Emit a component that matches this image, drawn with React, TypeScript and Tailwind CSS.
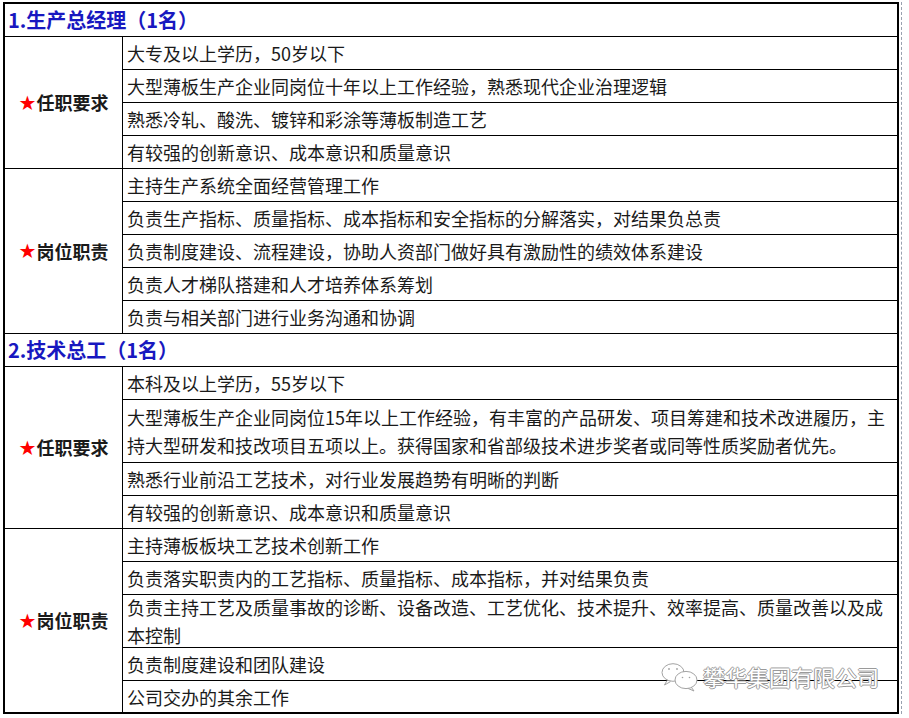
type Row = { lines: string[]; h: string }
type Group = { label: string; rows: Row[] }
type Section = { title: string; groups: Group[] }

const r = (text: string, h = 'h-[33px]'): Row => ({ lines: text.split('\n'), h })

const sections: Section[] = [
  {
    title: '1.生产总经理（1名）',
    groups: [
      {
        label: '任职要求',
        rows: [
          r('大专及以上学历，50岁以下'),
          r('大型薄板生产企业同岗位十年以上工作经验，熟悉现代企业治理逻辑'),
          r('熟悉冷轧、酸洗、镀锌和彩涂等薄板制造工艺'),
          r('有较强的创新意识、成本意识和质量意识'),
        ],
      },
      {
        label: '岗位职责',
        rows: [
          r('主持生产系统全面经营管理工作'),
          r('负责生产指标、质量指标、成本指标和安全指标的分解落实，对结果负总责'),
          r('负责制度建设、流程建设，协助人资部门做好具有激励性的绩效体系建设'),
          r('负责人才梯队搭建和人才培养体系筹划'),
          r('负责与相关部门进行业务沟通和协调'),
        ],
      },
    ],
  },
  {
    title: '2.技术总工（1名）',
    groups: [
      {
        label: '任职要求',
        rows: [
          r('本科及以上学历，55岁以下'),
          r(
            '大型薄板生产企业同岗位15年以上工作经验，有丰富的产品研发、项目筹建和技术改进履历，主\n持大型研发和技改项目五项以上。获得国家和省部级技术进步奖者或同等性质奖励者优先。',
            'h-[63px]',
          ),
          r('熟悉行业前沿工艺技术，对行业发展趋势有明晰的判断'),
          r('有较强的创新意识、成本意识和质量意识'),
        ],
      },
      {
        label: '岗位职责',
        rows: [
          r('主持薄板板块工艺技术创新工作'),
          r('负责落实职责内的工艺指标、质量指标、成本指标，并对结果负责'),
          r(
            '负责主持工艺及质量事故的诊断、设备改造、工艺优化、技术提升、效率提高、质量改善以及成\n本控制',
            'h-[53px]',
          ),
          r('负责制度建设和团队建设'),
          r('公司交办的其余工作', 'h-[31px]'),
        ],
      },
    ],
  },
]

function WeChatMark() {
  return (
    <svg width="40" height="36" viewBox="0 0 40 36" fill="#fff" stroke="#a3a3a3" strokeWidth="1">
      <path d="M7 22.5 L4.5 27 L10.5 23.6" />
      <ellipse cx="13" cy="14.5" rx="11" ry="8.8" />
      <circle cx="9" cy="11" r="0.9" fill="#a3a3a3" stroke="none" />
      <circle cx="17" cy="11" r="0.9" fill="#a3a3a3" stroke="none" />
      <path d="M31 28.8 L34 33 L27.5 30.2" />
      <ellipse cx="26" cy="22" rx="11" ry="8.6" />
      <circle cx="22.5" cy="19.5" r="0.8" fill="#a3a3a3" stroke="none" />
      <circle cx="29.5" cy="19.5" r="0.8" fill="#a3a3a3" stroke="none" />
    </svg>
  )
}

export default function App() {
  return (
    <div className="relative h-[718px] w-[909px] overflow-hidden bg-white font-['Noto_Sans_CJK_SC','Noto_Sans',sans-serif] text-[18px] text-[#1a1a1a]">
      <div className="flex pl-[3px] pt-[2px]">
        <div className="w-[896px] border-2 border-black">
          {sections.map((s, si) => (
            <div key={s.title}>
              <div className="flex h-[33px] items-center border-b border-black pl-[3px] text-[20px] font-bold leading-none text-[#1818c0]">
                {s.title}
              </div>
              {s.groups.map((g, gi) => {
                const lastGroup = si === sections.length - 1 && gi === s.groups.length - 1
                return (
                  <div key={g.label} className="flex">
                    <div
                      className={
                        'flex w-[118px] shrink-0 items-center justify-center border-r border-black font-bold ' +
                        (lastGroup ? '' : 'border-b')
                      }
                    >
                      <span className="font-['DejaVu_Sans',sans-serif] text-[20px] leading-none text-[#ff0000]">★</span>
                      <span>{g.label}</span>
                    </div>
                    <div className="flex-1">
                      {g.rows.map((row, ri) => {
                        const last = lastGroup && ri === g.rows.length - 1
                        return (
                          <div
                            key={ri}
                            className={
                              'flex items-center pl-[4px] leading-[28px] ' +
                              row.h +
                              (last ? '' : ' border-b border-black')
                            }
                          >
                            <div className="whitespace-nowrap">
                              {row.lines.map((l, li) => (
                                <div key={li}>{l}</div>
                              ))}
                            </div>
                          </div>
                        )
                      })}
                    </div>
                  </div>
                )
              })}
            </div>
          ))}
        </div>
        <div className="ml-[2px] h-[712px] border-l border-dashed border-gray-400" />
      </div>

      <div className="absolute left-[660px] top-[658px] flex items-center">
        <WeChatMark />
        <span className="ml-[3px] text-[22px] leading-none text-white [text-shadow:1px_0_0_#9a9a9a,-1px_0_0_#9a9a9a,0_1px_0_#9a9a9a,0_-1px_0_#9a9a9a]">
          攀华集团有限公司
        </span>
      </div>
    </div>
  )
}
